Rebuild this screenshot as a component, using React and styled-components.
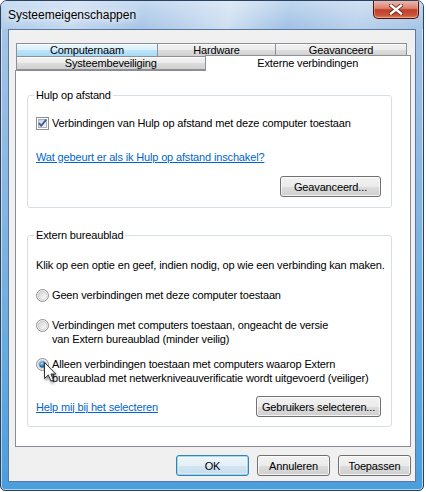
import React from 'react';
import styled, { createGlobalStyle } from 'styled-components';

const Global = createGlobalStyle`
  html, body { margin: 0; padding: 0; background: #ffffff; }
  body {
    font-family: "Liberation Sans", Arial, sans-serif;
    font-size: 11px;
    color: #000;
  }
  * { box-sizing: border-box; }
`;

const Window = styled.div`
  position: relative;
  width: 424px;
  height: 491px;
  border: 1px solid #2a4260;
  border-radius: 7px 7px 5px 5px;
  background: linear-gradient(180deg, #b7cfea 0px, #a3c2e5 40px, #72afe0 300px, #4a9edc 100%);
  display: flex;
  flex-direction: column;
  overflow: hidden;
  box-shadow: inset 0 0 0 1px rgba(255, 255, 255, 0.55);
`;

const TitleBar = styled.div`
  height: 28px;
  flex: none;
  display: flex;
  justify-content: space-between;
  align-items: flex-start;
  background:
    linear-gradient(180deg, rgba(255,255,255,0.35) 0px, rgba(255,255,255,0) 28px),
    linear-gradient(100deg, #afcbea 0%, #c3d8ef 18%, #a7c5e7 34%, #bed4ed 46%, #cddff1 54%, #a0c1e5 68%, #b9d0eb 84%, #a6c5e7 100%);
`;

const Title = styled.div`
  margin: 7px 0 0 7px;
  font-size: 12px;
  line-height: 15px;
  color: #000;
  text-shadow: 0 0 6px rgba(255, 255, 255, 0.95), 0 0 10px rgba(255, 255, 255, 0.8);
`;

const CloseButton = styled.div`
  width: 46px;
  height: 19px;
  margin: -1px 4px 0 0;
  border: 1px solid #4d1409;
  border-top: none;
  border-radius: 0 0 5px 5px;
  background:
    linear-gradient(180deg, rgba(255,255,255,0.35) 0%, rgba(255,255,255,0.15) 48%, rgba(255,255,255,0) 52%),
    linear-gradient(180deg, #e39b89 0%, #d46a55 45%, #c2402a 55%, #c9533a 85%, #e08a6a 100%);
  box-shadow: inset 0 0 0 1px rgba(255, 200, 180, 0.45);
  display: flex;
  align-items: center;
  justify-content: center;
`;

const Client = styled.div`
  flex: 1;
  margin: 0 7px 8px 7px;
  border: 1px solid #5a789c;
  background: #f0f0f0;
  padding: 13px 4px 0 6px;
  display: flex;
  flex-direction: column;
`;

const TabControl = styled.div`
  width: 396px;
  display: flex;
  flex-direction: column;
`;

const TabRow = styled.div`
  display: flex;
  height: 14px;
  padding-left: 1px;
  margin-top: ${p => (p.$second ? '-1px' : '0')};
`;

const Tab = styled.div`
  position: relative;
  width: ${p => p.$w}px;
  height: ${p => (p.$selected ? '16px' : '14px')};
  margin-top: ${p => (p.$selected ? '-1px' : '0')};
  margin-left: ${p => (p.$first ? '0' : '-1px')};
  z-index: ${p => (p.$selected ? 3 : 1)};
  border: 1px solid #8c9096;
  border-bottom: ${p => (p.$selected ? 'none' : '1px solid #8c9096')};
  background: ${p =>
    p.$selected
      ? '#ffffff'
      : p.$hover
      ? 'linear-gradient(180deg, #eaf6fd 0%, #d9f0fc 50%, #bee6fd 51%, #a7d9f5 100%)'
      : 'linear-gradient(180deg, #f2f2f2 0%, #ebebeb 50%, #dddddd 51%, #cfcfcf 100%)'};
  box-shadow: ${p => (p.$selected ? 'none' : 'inset 0 1px 0 rgba(255,255,255,0.8)')};
  display: flex;
  justify-content: center;
  align-items: ${p => (p.$selected ? 'flex-start' : 'center')};
  padding-top: ${p => (p.$selected ? '1px' : '0')};
  font-size: 11px;
  line-height: 12px;
  letter-spacing: -0.15px;
  white-space: nowrap;
`;

const Panel = styled.div`
  position: relative;
  z-index: 2;
  height: 377px;
  border: 1px solid #898c95;
  background: #ffffff;
  padding: 17px 18px 0 11px;
  display: flex;
  flex-direction: column;
  gap: 20px;
`;

const GroupBox = styled.fieldset`
  margin: 0;
  min-width: 0;
  border: 1px solid #d5dfe5;
  border-radius: 3px;
  padding: 0 10px ${p => p.$pb}px 8px;
  display: flex;
  flex-direction: column;
`;

const Legend = styled.legend`
  padding: 0 2px;
  margin-left: -2px;
  line-height: 14px;
  font-size: 11px;
  letter-spacing: -0.15px;
`;

const Text = styled.div`
  line-height: 14px;
  letter-spacing: -0.15px;
  margin-top: ${p => p.$mt || 0}px;
  white-space: nowrap;
`;

const CheckRow = styled.label`
  display: flex;
  align-items: center;
  gap: 3px;
  height: 14px;
  margin-top: ${p => p.$mt || 0}px;
  line-height: 14px;
  letter-spacing: -0.15px;
  white-space: nowrap;
`;

const RadioRow = styled.label`
  display: flex;
  align-items: flex-start;
  gap: 3px;
  margin-top: ${p => p.$mt || 0}px;
  line-height: 14px;
  letter-spacing: -0.15px;
  white-space: nowrap;
`;

const RadioIcon = styled.svg`
  flex: none;
  margin-top: 1px;
`;

const Link = styled.a`
  display: block;
  color: #0066cc;
  text-decoration: underline;
  line-height: 14px;
  letter-spacing: -0.15px;
  white-space: nowrap;
  margin-top: ${p => p.$mt || 0}px;
`;

const ButtonLine = styled.div`
  display: flex;
  justify-content: ${p => p.$between ? 'space-between' : 'flex-end'};
  align-items: center;
  margin-top: ${p => p.$mt || 0}px;
`;

const Button = styled.div`
  width: ${p => p.$w}px;
  height: 21px;
  border: 1px solid ${p => (p.$default ? '#3c7fb1' : '#707070')};
  border-radius: 3px;
  background: ${p =>
    p.$default
      ? 'linear-gradient(180deg, #eef6fb 0%, #e3eff7 50%, #d3e5f1 51%, #c6dcec 100%)'
      : 'linear-gradient(180deg, #f2f2f2 0%, #ebebeb 50%, #dddddd 51%, #cfcfcf 100%)'};
  box-shadow: ${p =>
    p.$default
      ? 'inset 0 0 0 1px rgba(72, 200, 246, 0.55), inset 0 0 0 2px rgba(255,255,255,0.4)'
      : 'inset 0 0 0 1px rgba(255, 255, 255, 0.75)'};
  display: flex;
  align-items: center;
  justify-content: center;
  font-size: 11px;
  letter-spacing: -0.15px;
  white-space: nowrap;
`;

const BottomBar = styled.div`
  display: flex;
  justify-content: flex-end;
  gap: 8px;
  margin-top: 8px;
  width: 396px;
`;

const Cursor = styled.svg`
  position: absolute;
  left: 43px;
  top: 361px;
  z-index: 10;
  filter: drop-shadow(1px 2px 1.5px rgba(0, 0, 0, 0.45));
`;

const CheckIcon = () => (
  <svg width="13" height="13" viewBox="0 0 13 13" style={{ flex: 'none' }}>
    <defs>
      <linearGradient id="cbg" x1="0" y1="0" x2="1" y2="1">
        <stop offset="0" stopColor="#cbcfd5" />
        <stop offset="1" stopColor="#f6f6f6" />
      </linearGradient>
    </defs>
    <rect x="0.5" y="0.5" width="12" height="12" fill="#fff" stroke="#8e8f8f" />
    <rect x="2.5" y="2.5" width="8" height="8" fill="url(#cbg)" stroke="#aeb3b9" />
    <path d="M3 6.2 L5.3 8.8 L10.2 2.6" fill="none" stroke="#3a5a99" strokeWidth="1.8" strokeLinejoin="round" />
  </svg>
);

const Radio = ({ checked }) => (
  <RadioIcon width="13" height="13" viewBox="0 0 13 13">
    <defs>
      <linearGradient id="rbg" x1="0" y1="0" x2="1" y2="1">
        <stop offset="0" stopColor="#d0d0d0" />
        <stop offset="1" stopColor="#ffffff" />
      </linearGradient>
      <radialGradient id="rdot" cx="0.4" cy="0.35" r="0.7">
        <stop offset="0" stopColor="#b8e3fb" />
        <stop offset="0.45" stopColor="#3e92cf" />
        <stop offset="1" stopColor="#0f3c70" />
      </radialGradient>
    </defs>
    <circle cx="6.5" cy="6.5" r="6" fill="#f4f4f4" stroke="#8e8f8f" />
    <circle cx="6.5" cy="6.5" r="4.3" fill="url(#rbg)" stroke="#b9bcc0" strokeWidth="0.6" />
    {checked && <circle cx="6.5" cy="6.5" r="3.3" fill="url(#rdot)" />}
  </RadioIcon>
);

export default function App() {
  return (
    <>
      <Global />
      <Window>
        <TitleBar>
          <Title>Systeemeigenschappen</Title>
          <CloseButton>
            <svg width="14" height="11" viewBox="0 0 14 11">
              <path d="M2 1.5 L12 9.5 M12 1.5 L2 9.5" stroke="#5a1d12" strokeWidth="4" strokeLinecap="square" />
              <path d="M2 1.5 L12 9.5 M12 1.5 L2 9.5" stroke="#ffffff" strokeWidth="2.4" strokeLinecap="square" />
            </svg>
          </CloseButton>
        </TitleBar>
        <Client>
          <TabControl>
            <TabRow>
              <Tab $w={142} $first $hover>Computernaam</Tab>
              <Tab $w={119}>Hardware</Tab>
              <Tab $w={132}>Geavanceerd</Tab>
            </TabRow>
            <TabRow $second>
              <Tab $w={190} $first>Systeembeveiliging</Tab>
              <Tab $w={207} $selected>Externe verbindingen</Tab>
            </TabRow>
            <Panel>
              <GroupBox $pb={10}>
                <Legend>Hulp op afstand</Legend>
                <CheckRow $mt={14}>
                  <CheckIcon />
                  Verbindingen van Hulp op afstand met deze computer toestaan
                </CheckRow>
                <Link $mt={20}>Wat gebeurt er als ik Hulp op afstand inschakel?</Link>
                <ButtonLine $mt={12}>
                  <Button $w={101}>Geavanceerd...</Button>
                </ButtonLine>
              </GroupBox>
              <GroupBox $pb={9}>
                <Legend>Extern bureaublad</Legend>
                <Text $mt={16}>Klik op een optie en geef, indien nodig, op wie een verbinding kan maken.</Text>
                <RadioRow $mt={16}>
                  <Radio />
                  <span>Geen verbindingen met deze computer toestaan</span>
                </RadioRow>
                <RadioRow $mt={16}>
                  <Radio />
                  <span>
                    Verbindingen met computers toestaan, ongeacht de versie
                    <br />
                    van Extern bureaublad (minder veilig)
                  </span>
                </RadioRow>
                <RadioRow $mt={11}>
                  <Radio checked />
                  <span>
                    Alleen verbindingen toestaan met computers waarop Extern
                    <br />
                    bureaublad met netwerkniveauverificatie wordt uitgevoerd (veiliger)
                  </span>
                </RadioRow>
                <ButtonLine $between $mt={11}>
                  <Link>Help mij bij het selecteren</Link>
                  <Button $w={125}>Gebruikers selecteren...</Button>
                </ButtonLine>
              </GroupBox>
            </Panel>
          </TabControl>
          <BottomBar>
            <Button $w={73} $default>OK</Button>
            <Button $w={73}>Annuleren</Button>
            <Button $w={73}>Toepassen</Button>
          </BottomBar>
        </Client>
        <Cursor width="14" height="21" viewBox="0 0 14 21">
          <path
            d="M0.5 0.5 L0.5 16.5 L4.3 12.9 L6.9 19 L9.4 17.9 L6.9 12 L11.8 12 Z"
            fill="#ffffff"
            stroke="#333"
            strokeWidth="1"
            strokeLinejoin="round"
          />
        </Cursor>
      </Window>
    </>
  );
}
